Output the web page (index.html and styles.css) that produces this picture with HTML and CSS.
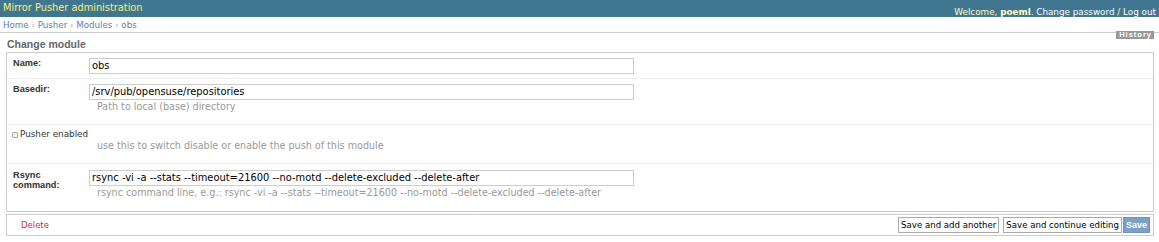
FILE: index.html
```html
<!DOCTYPE html>
<html>
<head>
<meta charset="utf-8">
<title>Change module | Mirror Pusher administration</title>
<link rel="stylesheet" href="styles.css">
</head>
<body>
<div class="header">
  <div class="branding">Mirror Pusher administration</div>
  <div class="user-tools">Welcome, <strong>poeml</strong>. <a href="#">Change password</a> / <a href="#">Log out</a></div>
</div>
<div class="breadcrumbs"><a href="#">Home</a> › <a href="#">Pusher</a> › <a href="#">Modules</a> › <span class="current">obs</span></div>
<div class="content">
  <div class="title-row">
    <h1>Change module</h1>
    <a class="history" href="#">History</a>
  </div>
  <form>
    <fieldset class="module">
      <div class="form-row first">
        <label class="label">Name:</label>
        <div class="field"><input class="vText" type="text" value="obs"></div>
      </div>
      <div class="form-row">
        <label class="label">Basedir:</label>
        <div class="field">
          <input class="vText" type="text" value="/srv/pub/opensuse/repositories">
          <p class="help">Path to local (base) directory</p>
        </div>
      </div>
      <div class="form-row checkbox-row">
        <div class="check-line"><input class="cb" type="checkbox"><label>Pusher enabled</label></div>
        <p class="help help-check">use this to switch disable or enable the push of this module</p>
      </div>
      <div class="form-row last">
        <label class="label">Rsync command:</label>
        <div class="field">
          <input class="vText" type="text" value="rsync -vi -a --stats --timeout=21600 --no-motd --delete-excluded --delete-after">
          <p class="help">rsync command line, e.g.: rsync -vi -a --stats --timeout=21600 --no-motd --delete-excluded --delete-after</p>
        </div>
      </div>
    </fieldset>
    <div class="submit-row">
      <a class="deletelink" href="#">Delete</a>
      <button type="button" class="btn">Save and add another</button>
      <button type="button" class="btn">Save and continue editing</button>
      <button type="button" class="btn default">Save</button>
    </div>
  </form>
</div>
</body>
</html>
```
FILE: styles.css
```css
* { box-sizing: border-box; }
html, body { margin: 0; background: #fff; }
body { font-family: "DejaVu Sans", sans-serif; color: #333; }
a { text-decoration: none; }

.header {
  display: flex;
  justify-content: space-between;
  align-items: flex-start;
  height: 17px;
  background: #417690;
}
.branding {
  padding: 2px 0 0 3px;
  font-size: 9.8px;
  line-height: 12px;
  color: #f4f379;
}
.user-tools {
  align-self: flex-end;
  padding: 0 3px 0 0;
  font-size: 8.8px;
  line-height: 10px;
  color: #ffc;
}
.user-tools a { color: #fff; }

.breadcrumbs {
  height: 16px;
  padding: 2px 3px 0;
  border-bottom: 1px solid #ccc;
  font-size: 8.7px;
  line-height: 13px;
  color: #aaa;
}
.breadcrumbs a { color: #5b80b2; }
.breadcrumbs .current { color: #777; }

.content { padding: 0 5px 0 6px; }

.title-row {
  display: flex;
  justify-content: space-between;
  align-items: flex-start;
  height: 19px;
}
.title-row h1 {
  margin: 0;
  padding: 6px 0 0 1px;
  font: bold 10.5px/10px "Liberation Sans", sans-serif;
  color: #666;
}
.history {
  display: block;
  margin-top: -2px;
  height: 8px;
  padding: 0 2px 0 3px;
  background: #999;
  color: #fff;
  font: bold 7.5px/8px "Liberation Sans", sans-serif;
  letter-spacing: 1px;
}

form { margin: 0; }
.module {
  margin: 0;
  padding: 0;
  border: 1px solid #ccc;
  min-width: 0;
}
.form-row {
  display: flex;
  padding: 5px 6px 4px;
  border-bottom: 1px solid #eee;
}
.form-row.last { border-bottom: 0; padding-top: 6px; padding-bottom: 5px; }
.form-row .label {
  flex: 0 0 76px;
  padding-right: 6px;
  font: bold 9.2px/10px "Liberation Sans", sans-serif;
  color: #333;
}
.field { flex: 1; }
.vText {
  display: block;
  width: 545px;
  height: 16px;
  margin: 0;
  padding: 0 2px 2px;
  border: 1px solid #ccc;
  background: #fff;
  font: 9.9px "DejaVu Sans", sans-serif;
  color: #000;
}
.help {
  margin: 1px 0 8px 8px;
  font-size: 9.6px;
  line-height: 11px;
  color: #999;
}

.checkbox-row { flex-direction: column; padding-top: 3px; }
.check-line {
  display: flex;
  align-items: center;
  margin-left: -1px;
  font-size: 8.8px;
  line-height: 12px;
  color: #333;
}
.cb {
  appearance: none;
  -webkit-appearance: none;
  width: 6px;
  height: 6px;
  margin: 1px 2px 0 0;
  border: 1px solid #aaa;
  border-radius: 1px;
  background: #f2f2f2;
}
.help-check { margin: 0 0 8px 84px; }

.submit-row {
  display: flex;
  align-items: center;
  height: 22px;
  margin-top: 2px;
  padding: 0 3px 0 14px;
  border: 1px solid #ccc;
}
.deletelink {
  margin-right: auto;
  font-size: 8.5px;
  color: #cc3434;
}
.btn {
  height: 16px;
  margin: 0 0 0 4px;
  padding: 0 2px;
  border: 1px solid #aaa;
  background: #fff;
  font: 8.6px "DejaVu Sans", sans-serif;
  color: #000;
}
.btn.default {
  margin-left: 1px;
  padding: 0 2px;
  background: #7ca0c7;
  border-color: #6f93bb;
  font: bold 9px "Liberation Sans", sans-serif;
  color: #fff;
}
```
